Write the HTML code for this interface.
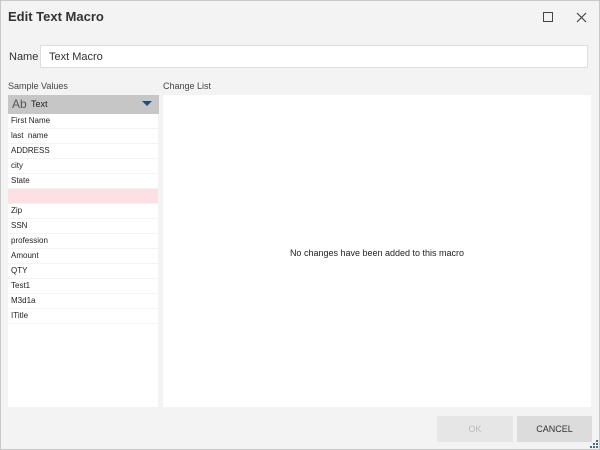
<html><head><style>
body{margin:0;width:600px;height:450px;background:#f3f3f3;font-family:"Liberation Sans",sans-serif;position:relative;overflow:hidden}
.b{position:absolute;box-sizing:border-box}
.win{left:0;top:0;width:600px;height:450px;border:1px solid #c8c8c8}
.t{font-size:9px;color:#222;position:absolute}
.row{position:absolute;left:8px;width:150px;height:14px;background:#fff;font-size:8px;color:#222;padding-left:3px;line-height:13px;box-sizing:border-box}
</style></head><body>
<div class="b win"></div>
<div class="t" style="left:8px;top:9px;font-size:13px;font-weight:bold;color:#333">Edit Text Macro</div>
<div class="b" style="left:543px;top:12px;width:10px;height:10px;border:1.3px solid #444"></div>
<svg class="b" style="left:576px;top:12px" width="11" height="11"><path d="M1 1L10 10M10 1L1 10" stroke="#444" stroke-width="1.2"/></svg>
<div class="t" style="left:9px;top:51px;font-size:11px;color:#333">Name</div>
<div class="b" style="left:40px;top:45px;width:548px;height:23px;background:#fff;border:1px solid #ddd;font-size:11px;color:#333;padding:5px 0 0 8px">Text Macro</div>
<div class="t" style="left:8px;top:81px;color:#444">Sample Values</div>
<div class="t" style="left:163px;top:81px;color:#444">Change List</div>
<div class="b" style="left:8px;top:95px;width:151px;height:312px;background:#f3f3f3"></div>
<div class="b" style="left:8px;top:95px;width:151px;height:19px;background:#c6c6c6"></div>
<div class="t" style="left:12px;top:97px;font-size:12px;color:#555">Ab</div>
<div class="t" style="left:31px;top:99px;color:#222">Text</div>
<svg class="b" style="left:142px;top:101px" width="10" height="6"><path d="M0 0H10L5 5Z" fill="#1f4e79"/></svg>
<div class="row" style="top:114px">First Name</div>
<div class="row" style="top:129px">last &nbsp;name</div>
<div class="row" style="top:144px">ADDRESS</div>
<div class="row" style="top:159px">city</div>
<div class="row" style="top:174px">State</div>
<div class="row" style="top:189px;background:#fde0e3"></div>
<div class="row" style="top:204px">Zip</div>
<div class="row" style="top:219px">SSN</div>
<div class="row" style="top:234px">profession</div>
<div class="row" style="top:249px">Amount</div>
<div class="row" style="top:264px">QTY</div>
<div class="row" style="top:279px">Test1</div>
<div class="row" style="top:294px">M3d1a</div>
<div class="row" style="top:309px">ITitle</div>
<div class="b" style="left:8px;top:324px;width:150px;height:83px;background:#fff"></div>
<div class="b" style="left:163px;top:95px;width:428px;height:312px;background:#fff"></div>
<div class="t" style="left:163px;top:248px;width:428px;text-align:center">No changes have been added to this macro</div>
<div class="b" style="left:437px;top:416px;width:76px;height:26px;background:#e6e6e6;color:#bbb;font-size:9px;text-align:center;line-height:26px">OK</div>
<div class="b" style="left:517px;top:416px;width:75px;height:26px;background:#dcdcdc;color:#333;font-size:9px;text-align:center;line-height:26px">CANCEL</div>
<svg class="b" style="left:589px;top:439px" width="9" height="9"><path d="M7 1h2v2h-2zM4 4h2v2h-2zM7 4h2v2h-2zM1 7h2v2h-2zM4 7h2v2h-2zM7 7h2v2h-2z" fill="#4a6a8a"/></svg>
</body></html>
